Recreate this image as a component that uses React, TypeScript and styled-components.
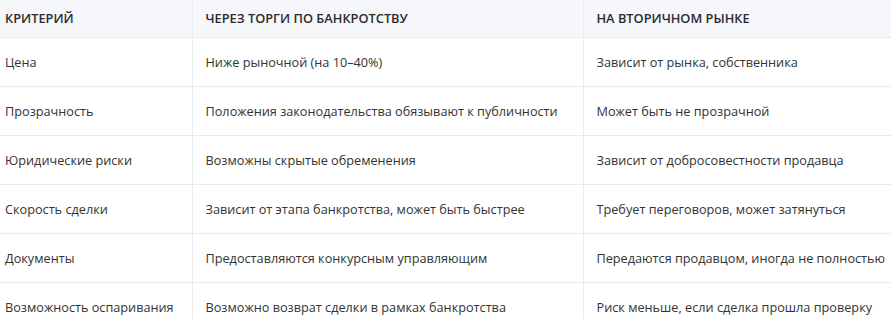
import React from "react";
import styled, { createGlobalStyle } from "styled-components";

const Global = createGlobalStyle`
  html, body {
    margin: 0;
    padding: 0;
    background: #ffffff;
    overflow: hidden;
  }
`;

const Wrapper = styled.div`
  width: 891px;
  height: 319px;
  overflow: hidden;
  font-family: "Open Sans", "Noto Sans", sans-serif;
  color: #333333;
`;

const Table = styled.table`
  border-collapse: collapse;
  table-layout: fixed;
  width: 920px;
`;

const HeadRow = styled.tr`
  height: 37px;
  background: #f6f7fa;
`;

const Row = styled.tr`
  height: 49px;
`;

const Th = styled.th<{ $w?: number }>`
  box-sizing: border-box;
  width: ${(p) => (p.$w ? `${p.$w}px` : "auto")};
  text-align: left;
  font-size: 12.8px;
  font-weight: 600;
  color: #2b2b2b;
  text-transform: uppercase;
  padding: 0 13px;
  border-right: 1px solid #e9eaf0;
  border-bottom: 1px solid #e9eaf0;
  white-space: nowrap;
  &:first-child {
    padding-left: 5px;
  }
`;

const Td = styled.td`
  box-sizing: border-box;
  font-size: 12.7px;
  padding: 0 13px;
  border-right: 1px solid #e9eaf0;
  border-bottom: 1px solid #e9eaf0;
  white-space: nowrap;
  &:first-child {
    padding-left: 5px;
  }
`;

const rows = [
  ["Цена", "Ниже рыночной (на 10–40%)", "Зависит от рынка, собственника"],
  ["Прозрачность", "Положения законодательства обязывают к публичности", "Может быть не прозрачной"],
  ["Юридические риски", "Возможны скрытые обременения", "Зависит от добросовестности продавца"],
  ["Скорость сделки", "Зависит от этапа банкротства, может быть быстрее", "Требует переговоров, может затянуться"],
  ["Документы", "Предоставляются конкурсным управляющим", "Передаются продавцом, иногда не полностью"],
  ["Возможность оспаривания", "Возможно возврат сделки в рамках банкротства", "Риск меньше, если сделка прошла проверку"],
];

export default function App() {
  return (
    <Wrapper>
      <Global />
      <Table>
        <thead>
          <HeadRow>
            <Th $w={192}>Критерий</Th>
            <Th $w={391}>Через торги по банкротству</Th>
            <Th>На вторичном рынке</Th>
          </HeadRow>
        </thead>
        <tbody>
          {rows.map((r) => (
            <Row key={r[0]}>
              {r.map((c) => (
                <Td key={c}>{c}</Td>
              ))}
            </Row>
          ))}
        </tbody>
      </Table>
    </Wrapper>
  );
}
